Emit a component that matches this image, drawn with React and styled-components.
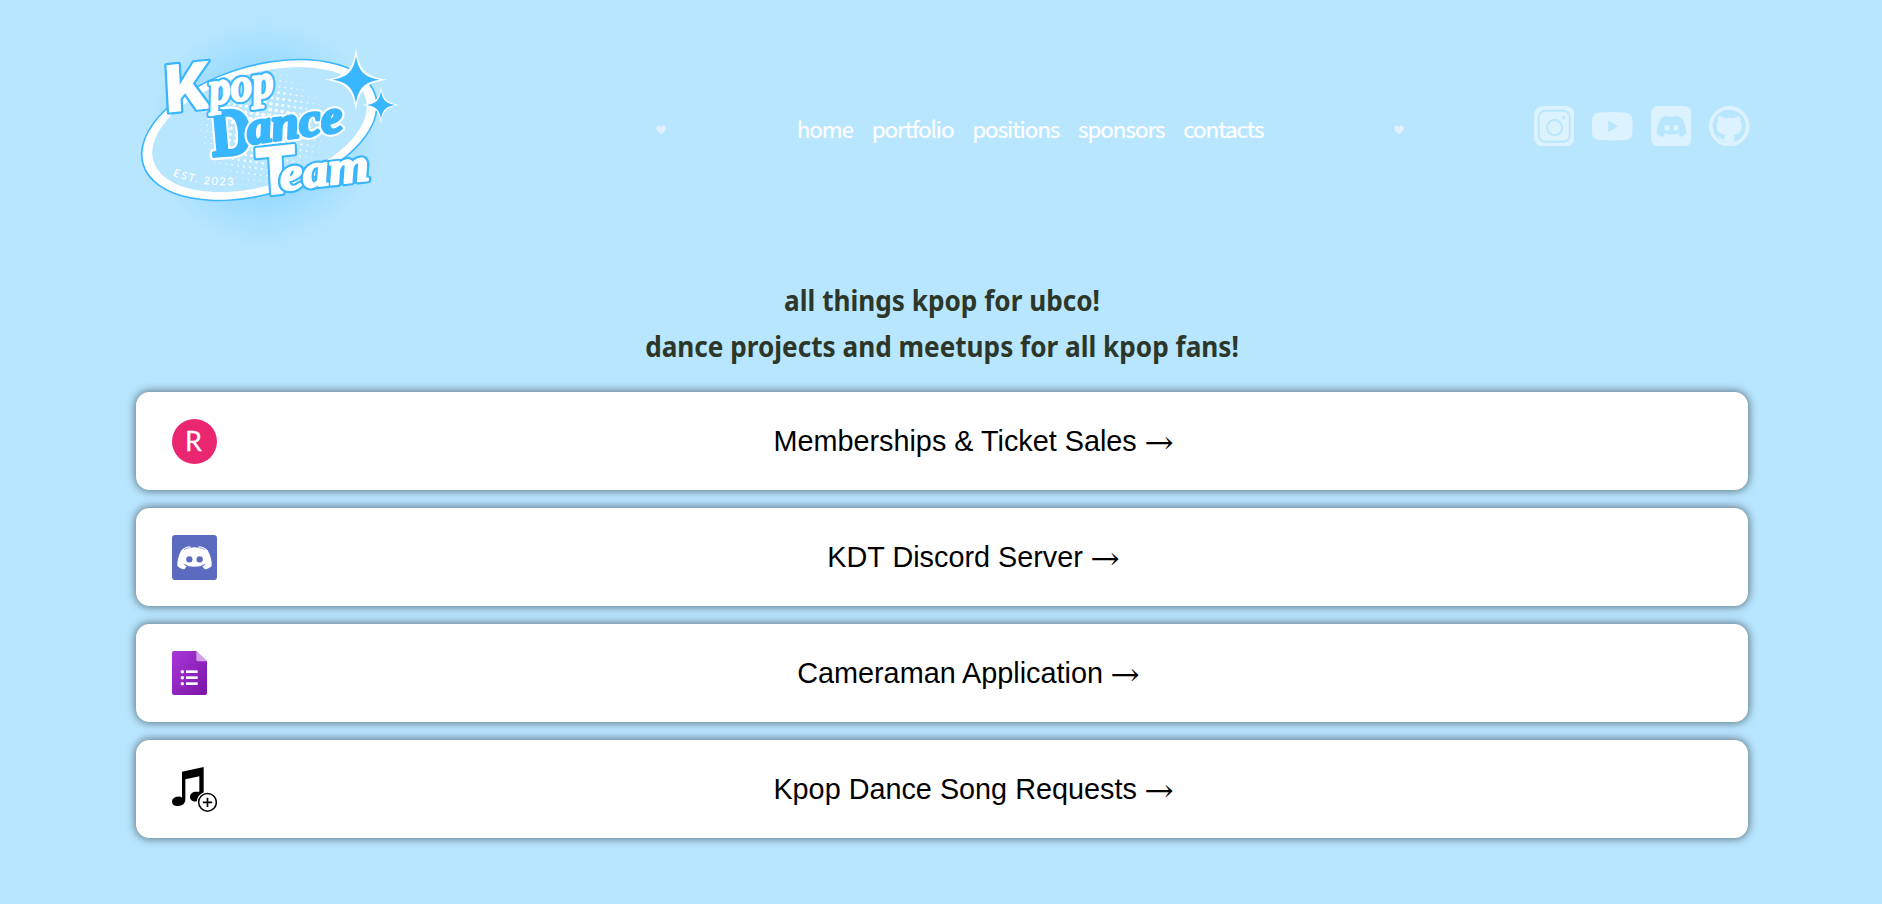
import React from 'react';
import styled, { createGlobalStyle } from 'styled-components';

const sky = '#b8e6ff';
const mist = '#dcf2ff';
const blue = '#38b6ff';

const Global = createGlobalStyle`
  * { box-sizing: border-box; }
  body { margin: 0; background: ${sky}; font-family: "Noto Sans", sans-serif; }
`;

const Page = styled.div`
  min-height: 904px;
  background: ${sky};
`;

const Header = styled.header`
  display: flex;
  align-items: center;
  height: 250px;
  padding: 10px 132px 0 120px;
`;

const LogoSvg = styled.svg`
  flex: none;
  width: 300px;
  height: 240px;
  overflow: visible;
`;

const Nav = styled.nav`
  display: flex;
  align-items: center;
  justify-content: space-between;
  width: 748px;
  margin-left: 236px;
  padding-bottom: 1px;
`;

const NavLinks = styled.div`
  display: flex;
  gap: 18.8px;
  padding-bottom: 4px;
`;

const NavLink = styled.a`
  color: #fff;
  font-family: "Noto Sans CJK SC", "Noto Sans", sans-serif;
  font-size: 22.5px;
  font-weight: 400;
  line-height: 30px;
  letter-spacing: -1.1px;
  -webkit-text-stroke: 0.2px #fff;
`;

const HeartSvg = styled.svg`
  width: 10px;
  height: 10px;
  fill: #e0f0ff;
`;

const Socials = styled.div`
  display: flex;
  gap: 18px;
  margin-left: auto;
  padding-right: 0.5px;
  padding-bottom: 8px;
`;

const SocialSvg = styled.svg`
  width: 40.5px;
  height: 40.5px;
  display: block;
`;

const Intro = styled.div`
  padding: 27px 0 0 2px;
  text-align: center;
`;

const IntroLine = styled.h2`
  margin: 0;
  color: #2c3729;
  font-size: 29px;
  font-weight: 700;
  line-height: 46px;
  transform: scaleX(0.902);
`;

const Cards = styled.main`
  display: flex;
  flex-direction: column;
  gap: 18px;
  padding: 23px 134px 0 136px;
`;

const Card = styled.a`
  display: flex;
  align-items: center;
  gap: 18px;
  height: 98px;
  padding: 26.5px 36px;
  border-radius: 13.5px;
  background: #fff;
  box-shadow: 0 0 9px 1px rgba(0, 0, 0, 0.5);
`;

const CardIcon = styled.svg`
  flex: none;
  width: ${(p) => p.$width}px;
  height: 45px;
`;

const CardLabel = styled.span`
  flex: 1;
  padding-bottom: 1px;
  text-align: center;
  color: #000;
  font-family: "Liberation Sans", Arial, sans-serif;
  font-size: 28.8px;
  line-height: 34px;
`;

const Arrow = styled.span`
  display: inline-block;
  width: 28.8px;
  line-height: 30px;
  font-family: "DejaVu Math TeX Gyre", "Liberation Serif", serif;
  transform: scaleX(1.08);
`;

const star = (r, a, b) =>
  `M0 ${-r}C${a * r} ${-b * r} ${b * r} ${-a * r} ${r} 0` +
  `C${b * r} ${a * r} ${a * r} ${b * r} 0 ${r}` +
  `C${-a * r} ${b * r} ${-b * r} ${a * r} ${-r} 0` +
  `C${-b * r} ${-a * r} ${-a * r} ${-b * r} 0 ${-r}Z`;

const dots = [];
for (let i = -13; i <= 13; i++) {
  for (let j = -12; j <= 12; j++) {
    const a = (8 * Math.PI) / 180;
    const u = i * 18;
    const v = j * 18;
    const x = u * Math.cos(a) - v * Math.sin(a);
    const y = u * Math.sin(a) + v * Math.cos(a);
    const r = 8.6 * (1 - Math.hypot(x, y * 1.08) / 225);
    if (r > 1) dots.push([425 + x, 350 + y, r]);
  }
}

const serif = '"Liberation Serif", serif';
const heavy = 'Roboto, sans-serif';

// One lettering piece: outer outline, thickened body.
function Letters({ x, y, size, width, angle, body, edge, family, fat = 6, rim = 7, slant = 0, lean = 0, children }) {
  const common = {
    fontFamily: family,
    fontSize: size,
    fontWeight: 900,
    textLength: width,
    lengthAdjust: 'spacingAndGlyphs',
    strokeLinejoin: 'round',
    fontStyle: family === serif && slant ? 'italic' : 'normal',
    style: { paintOrder: 'stroke' },
  };
  return (
    <g transform={`translate(${x} ${y}) rotate(${angle}) skewX(${lean})`}>
      <text {...common} fill={edge} stroke={edge} strokeWidth={fat + rim * 2} aria-hidden="true">{children}</text>
      <text {...common} fill={body} stroke={body} strokeWidth={fat}>{children}</text>
    </g>
  );
}

function Logo() {
  return (
    <LogoSvg viewBox="0 0 900 720">
      <defs>
        <radialGradient id="glow">
          <stop offset="0" stopColor={blue} stopOpacity="0.32" />
          <stop offset="0.55" stopColor={blue} stopOpacity="0.24" />
          <stop offset="0.8" stopColor={blue} stopOpacity="0.1" />
          <stop offset="1" stopColor={blue} stopOpacity="0" />
        </radialGradient>
        <path id="est" d="M158 497Q238 530 345 526" />
      </defs>
      <circle cx="430" cy="368" r="345" fill="url(#glow)" />
      <g transform="rotate(-16.5 418 360)">
        <ellipse cx="418" cy="360" rx="366" ry="195" fill={blue} />
        <ellipse cx="418" cy="360" rx="361" ry="190" fill="#fff" />
        <ellipse cx="419" cy="359" rx="332" ry="169" fill={sky} />
      </g>
      <g fill="#fff" opacity="0.85">
        {dots.map(([x, y, r], i) => <circle key={i} cx={x} cy={y} r={r} />)}
      </g>
      <text fill="#fff" fontFamily="Lato, sans-serif" fontSize="33" fontWeight="500" letterSpacing="5">
        <textPath href="#est">EST. 2023</textPath>
      </text>
      <Letters x={278} y={438} size={200} width={122} angle={-5} body={blue} edge="#fff" family={serif} fat={12}>D</Letters>
      <Letters x={386} y={403} size={142} width={290} angle={-8} body={blue} edge="#fff" family={serif} fat={9} rim={6} slant={1}>ance</Letters>
      <Letters x={136} y={309} size={200} width={136} angle={-6} body="#fff" edge={blue} family={heavy} fat={0} rim={6.5} lean={-3}>K</Letters>
      <Letters x={272} y={284} size={142} width={196} angle={-8} body="#fff" edge={blue} family={serif} fat={6} rim={6.5} slant={1}>pop</Letters>
      <Letters x={412} y={557} size={198} width={122} angle={-6} body="#fff" edge={blue} family={heavy} fat={4} rim={6.5} lean={-3}>T</Letters>
      <Letters x={484} y={542} size={142} width={270} angle={-7} body="#fff" edge={blue} family={serif} fat={6} rim={6.5} slant={1}>eam</Letters>
      <g transform="translate(708 209)">
        <path d={star(95, 0.07, 0.33)} fill="#fff" />
        <path d={star(71, 0.1, 0.36)} fill={blue} />
      </g>
      <g transform="translate(783 285)">
        <path d={star(56, 0.07, 0.33)} fill="#fff" />
        <path d={star(42, 0.1, 0.36)} fill={blue} />
      </g>
    </LogoSvg>
  );
}

const Heart = () => (
  <HeartSvg viewBox="0 0 20 20">
    <path d="M10 19C6 15 .5 11 .5 6.300C.5 3 2.800 1 5.300 1C7.300 1 9 2 10 4C11 2 12.700 1 14.700 1C17.200 1 19.500 3 19.500 6.300C19.500 11 14 15 10 19Z" />
  </HeartSvg>
);

function DiscordFace({ fill, hole }) {
  return (
    <>
      <path
        fill={fill}
        d="M28 46C36 38 46 34 54 34L57 38Q67 36 78 38L81 34C89 34 99 38 107 46C116 62 120 80 119 93C112 100 104 103 98 103L91 94Q96 92 100 88C80 98 55 98 35 88Q39 92 44 94L37 103C31 103 23 100 16 93C15 80 19 62 28 46Z"
      />
      <circle cx="52" cy="73" r="9.500" fill={hole} />
      <circle cx="83" cy="73" r="9.500" fill={hole} />
    </>
  );
}

const InstagramIcon = () => (
  <SocialSvg viewBox="0 0 120 120">
    <rect width="120" height="120" rx="26" fill={mist} />
    <g fill="none" stroke={sky} strokeWidth="5.500">
      <rect x="14" y="14" width="92" height="92" rx="19" />
      <circle cx="61" cy="64" r="22.500" />
    </g>
    <circle cx="88" cy="34" r="4.500" fill={sky} />
  </SocialSvg>
);

const YoutubeIcon = () => (
  <SocialSvg viewBox="0 0 120 120">
    <path fill={mist} d="M18 20Q60 16 102 20Q120 22 120 44V76Q120 98 102 100Q60 104 18 100Q0 98 0 76V44Q0 22 18 20Z" />
    <path fill={sky} d="M48 43L78 60L48 77Z" />
  </SocialSvg>
);

const DiscordIcon = () => (
  <SocialSvg viewBox="0 0 120 120">
    <rect width="120" height="120" rx="22" fill={mist} />
    <g transform="translate(4 -1.500) scale(.84 .9)">
      <DiscordFace fill={sky} hole={mist} />
    </g>
  </SocialSvg>
);

const GithubIcon = () => (
  <SocialSvg viewBox="0 0 120 120">
    <circle cx="60" cy="60" r="54.500" fill="none" stroke={mist} strokeWidth="11" />
    <path
      fill={mist}
      d="M27 31C33 29 40 32 46 36Q60 33 74 36C80 32 87 29 92 31Q95 37 93 44C99 51 98 60 96 68C93 79 84 84 73 86Q76 90 76 95V116H46V104C36 106 32 101 29 95Q27 91 23 90Q31 88 35 95Q39 100 46 98Q46 90 49 86C36 84 27 79 24 68C21 58 22 50 27 44Q25 37 27 31Z"
    />
  </SocialSvg>
);

const RubricIcon = () => (
  <CardIcon $width={45} viewBox="0 0 135 135">
    <circle cx="67.500" cy="67.500" r="67.500" fill="#eb2670" />
    <text x="39" y="95" fill="#fff" stroke="#fff" strokeWidth="0.8" fontFamily="Lato, sans-serif" fontSize="81">R</text>
  </CardIcon>
);

const ServerIcon = () => (
  <CardIcon $width={45} viewBox="0 0 135 135">
    <rect width="135" height="135" rx="10" fill="#5c6bc0" />
    <DiscordFace fill="#fff" hole="#5c6bc0" />
    <path d="M36 44Q45 38 55 38M99 44Q90 38 80 38M35 86Q39 90 47 92M100 86Q96 90 88 92" fill="none" stroke="#5c6bc0" strokeWidth="1.800" />
  </CardIcon>
);

const FormIcon = () => (
  <CardIcon $width={35} viewBox="0 0 105 135">
    <defs>
      <linearGradient id="form" x1="0" y1="0" x2="1" y2="1">
        <stop offset="0" stopColor="#a838d8" />
        <stop offset="1" stopColor="#7b14a6" />
      </linearGradient>
    </defs>
    <path d="M6 0H73L105 31V126Q105 132 99 132H6Q0 132 0 126V6Q0 0 6 0Z" fill="url(#form)" />
    <path d="M73 0L105 31H78Q73 31 73 26Z" fill="#d3a0e8" />
    <g fill="#fff">
      {[62, 80, 98].map((y) => (
        <React.Fragment key={y}>
          <circle cx="31" cy={y} r="5.200" />
          <rect x="42" y={y - 4} width="35" height="8" />
        </React.Fragment>
      ))}
    </g>
  </CardIcon>
);

const SongIcon = () => (
  <CardIcon $width={45} viewBox="0 0 135 135">
    <path d="M30 14L95 0V84H82V28L40 37V97C40 110 31 117 18 117C7 117 0 112 0 104C0 95 8 89 18 89Q25 88 30 92Z" />
    <path d="M54 90C54 80 62 74 73 74H84V84Q76 91 76 103C62 105 54 99 54 90Z" />
    <circle cx="106.500" cy="106" r="32" fill="#fff" />
    <circle cx="106.500" cy="106" r="26.500" fill="#fff" stroke="#000" strokeWidth="4.500" />
    <path d="M106.500 92V120M92.500 106H120.500" stroke="#000" strokeWidth="5" />
  </CardIcon>
);

const pages = ['home', 'portfolio', 'positions', 'sponsors', 'contacts'];
const links = [
  ['Memberships & Ticket Sales', RubricIcon],
  ['KDT Discord Server', ServerIcon],
  ['Cameraman Application', FormIcon],
  ['Kpop Dance Song Requests', SongIcon],
];

export default function App() {
  return (
    <Page>
      <Global />
      <Header>
        <Logo />
        <Nav>
          <Heart />
          <NavLinks>
            {pages.map((name) => <NavLink key={name}>{name}</NavLink>)}
          </NavLinks>
          <Heart />
        </Nav>
        <Socials>
          <InstagramIcon />
          <YoutubeIcon />
          <DiscordIcon />
          <GithubIcon />
        </Socials>
      </Header>
      <Intro>
        <IntroLine>all things kpop for ubco!</IntroLine>
        <IntroLine>dance projects and meetups for all kpop fans!</IntroLine>
      </Intro>
      <Cards>
        {links.map(([label, Icon]) => (
          <Card key={label}>
            <Icon />
            <CardLabel>{label} <Arrow>→</Arrow></CardLabel>
          </Card>
        ))}
      </Cards>
    </Page>
  );
}
